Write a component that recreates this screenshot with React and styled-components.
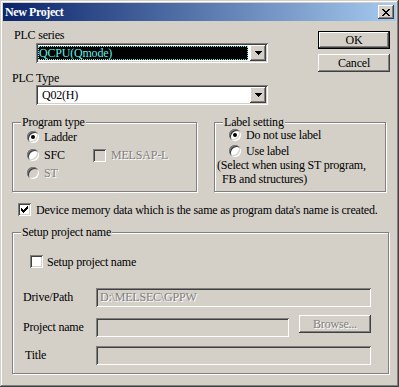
import React from "react";
import styled, { createGlobalStyle, css } from "styled-components";

const GlobalStyle = createGlobalStyle`
  body {
    margin: 0;
    background: #d4d0c8;
  }
`;

const raised = css`
  box-shadow: inset -1px -1px #404040, inset 1px 1px #fff,
    inset -2px -2px #808080, inset 2px 2px #d4d0c8;
`;

const sunken = css`
  box-shadow: inset 1px 1px #808080, inset -1px -1px #fff,
    inset 2px 2px #404040, inset -2px -2px #d4d0c8;
`;

const disabledText = css`
  color: #808080;
  text-shadow: 1px 1px #fff;
`;

const Window = styled.div`
  width: 399px;
  height: 387px;
  box-sizing: border-box;
  padding: 3px;
  background: #d4d0c8;
  font-family: "Liberation Serif", "Times New Roman", serif;
  font-size: 12px;
  line-height: 14px;
  letter-spacing: -0.2px;
  color: #000;
  box-shadow: inset -1px -1px #404040, inset 1px 1px #d4d0c8,
    inset -2px -2px #808080, inset 2px 2px #fff;
  display: flex;
  flex-direction: column;
`;

const TitleBar = styled.div`
  height: 18px;
  display: flex;
  align-items: center;
  justify-content: space-between;
  padding: 0 2px;
  background: linear-gradient(to right, #0a246a, #a6caf0);
  color: #fff;
  font-weight: bold;
  letter-spacing: -0.4px;
`;

const CloseButton = styled.div`
  width: 16px;
  height: 14px;
  background: #d4d0c8;
  display: flex;
  align-items: center;
  justify-content: center;
  ${raised}
`;

const TopRow = styled.div`
  display: flex;
  margin-top: 7px;
`;

const LeftCol = styled.div`
  width: 265px;
  display: flex;
  flex-direction: column;
`;

const FieldLabel = styled.div`
  height: 14px;
  margin-left: ${(p) => p.$indent || 0}px;
  margin-top: ${(p) => p.$top || 0}px;
  white-space: nowrap;
`;

const Combo = styled.div`
  width: 232px;
  height: 20px;
  margin-left: 33px;
  margin-top: ${(p) => p.$top || 0}px;
  box-sizing: border-box;
  padding: 2px;
  background: #fff;
  display: flex;
  ${sunken}
`;

const ComboValue = styled.div`
  flex: 1;
  margin: 1px 2px 1px 0;
  padding-left: 1px;
  ${(p) =>
    p.$selected
      ? css`
          background: #000;
          color: #5ff0e8;
          outline: 1px dotted #5ff0e8;
          outline-offset: -1px;
        `
      : css`
          padding-left: 4px;
        `}
`;

const DropButton = styled.div`
  width: 16px;
  background: #d4d0c8;
  display: flex;
  align-items: center;
  justify-content: center;
  ${raised}
`;

const ButtonCol = styled.div`
  margin-left: 50px;
  margin-top: 3px;
  display: flex;
  flex-direction: column;
  gap: 5px;
`;

const Button = styled.div`
  width: ${(p) => p.$w || 72}px;
  height: 18px;
  box-sizing: border-box;
  background: #d4d0c8;
  display: flex;
  align-items: center;
  justify-content: center;
  ${raised}
  ${(p) =>
    p.$default &&
    css`
      border: 1px solid #000;
    `}
  ${(p) => p.$disabled && disabledText}
`;

const GroupsRow = styled.div`
  display: flex;
  gap: 17px;
  margin: 17px 0 0 9px;
`;

const Group = styled.div`
  position: relative;
  width: ${(p) => p.$w}px;
  height: ${(p) => p.$h}px;
  box-sizing: border-box;
  border: 1px solid #808080;
  box-shadow: inset 1px 1px #fff, 1px 1px #fff;
  padding: ${(p) => p.$pad};
  margin-left: ${(p) => p.$left || 0}px;
  margin-top: ${(p) => p.$top || 0}px;
  display: flex;
  flex-direction: column;
`;

const Legend = styled.div`
  position: absolute;
  top: -8px;
  left: 8px;
  padding: 0 1px;
  background: #d4d0c8;
`;

const OptionRow = styled.div`
  height: ${(p) => p.$h || 18}px;
  display: flex;
  align-items: center;
  margin-left: ${(p) => p.$indent || 0}px;
  margin-top: ${(p) => p.$top || 0}px;
`;

const Option = styled.div`
  display: flex;
  align-items: center;
  gap: ${(p) => p.$gap || 5}px;
  width: ${(p) => (p.$w ? `${p.$w}px` : "auto")};
  white-space: nowrap;
  ${(p) => p.$disabled && disabledText}
`;

const Radio = styled.div`
  width: 12px;
  height: 12px;
  box-sizing: border-box;
  border-radius: 50%;
  background: ${(p) => (p.$disabled ? "#d4d0c8" : "#fff")};
  box-shadow: inset 1px 1px #808080, inset -1px -1px #fff,
    inset 2px 2px #404040, inset -2px -2px #d4d0c8;
  display: flex;
  align-items: center;
  justify-content: center;
  flex-shrink: 0;
`;

const Dot = styled.div`
  width: 4px;
  height: 4px;
  border-radius: 50%;
  background: #000;
`;

const Check = styled.div`
  width: 13px;
  height: 13px;
  box-sizing: border-box;
  background: ${(p) => (p.$disabled ? "#d4d0c8" : "#fff")};
  display: flex;
  align-items: center;
  justify-content: center;
  flex-shrink: 0;
  ${sunken}
`;

const NoteLine = styled.div`
  margin-left: ${(p) => p.$indent || 0}px;
  white-space: nowrap;
`;

const FieldRow = styled.div`
  display: flex;
  align-items: flex-start;
  margin-top: ${(p) => p.$top}px;
`;

const RowLabel = styled.div`
  width: ${(p) => 73 - (p.$indent || 0)}px;
  padding-left: ${(p) => p.$indent || 0}px;
  height: 19px;
  line-height: 19px;
  white-space: nowrap;
`;

const TextField = styled.div`
  width: ${(p) => p.$w}px;
  height: 19px;
  box-sizing: border-box;
  padding: 0 4px;
  line-height: 19px;
  background: #d4d0c8;
  ${sunken}
  ${disabledText}
`;

const CheckMark = () => (
  <svg width="7" height="7" viewBox="0 0 7 7" shapeRendering="crispEdges">
    {[2, 3, 4, 3, 2, 1, 0].map((y, x) => (
      <rect key={x} x={x} y={y} width="1" height="3" fill="#000" />
    ))}
  </svg>
);

const CloseGlyph = () => {
  const px = [
    [0, 0], [1, 0], [6, 0], [7, 0],
    [1, 1], [2, 1], [5, 1], [6, 1],
    [2, 2], [3, 2], [4, 2], [5, 2],
    [3, 3], [4, 3],
    [2, 4], [3, 4], [4, 4], [5, 4],
    [1, 5], [2, 5], [5, 5], [6, 5],
    [0, 6], [1, 6], [6, 6], [7, 6],
  ];
  return (
    <svg width="8" height="7" viewBox="0 0 8 7" shapeRendering="crispEdges">
      {px.map(([x, y]) => (
        <rect key={`${x}-${y}`} x={x} y={y} width="1" height="1" fill="#000" />
      ))}
    </svg>
  );
};

const Arrow = () => (
  <svg width="7" height="4" viewBox="0 0 7 4" shapeRendering="crispEdges">
    <path d="M0 0h7v1H0zM1 1h5v1H1zM2 2h3v1H2zM3 3h1v1H3z" fill="#000" />
  </svg>
);

const App = () => {
  return (
    <>
      <GlobalStyle />
      <Window>
        <TitleBar>
          <span>New Project</span>
          <CloseButton>
            <CloseGlyph />
          </CloseButton>
        </TitleBar>

        <TopRow>
          <LeftCol>
            <FieldLabel $indent={11}>PLC series</FieldLabel>
            <Combo $top={1}>
              <ComboValue $selected>QCPU(Qmode)</ComboValue>
              <DropButton>
                <Arrow />
              </DropButton>
            </Combo>
            <FieldLabel $indent={9} $top={8}>PLC Type</FieldLabel>
            <Combo>
              <ComboValue>Q02(H)</ComboValue>
              <DropButton>
                <Arrow />
              </DropButton>
            </Combo>
          </LeftCol>
          <ButtonCol>
            <Button $default>OK</Button>
            <Button>Cancel</Button>
          </ButtonCol>
        </TopRow>

        <GroupsRow>
          <Group $w={185} $h={70} $pad="5px 0 0 14px">
            <Legend>Program type</Legend>
            <OptionRow>
              <Option>
                <Radio>
                  <Dot />
                </Radio>
                Ladder
              </Option>
            </OptionRow>
            <OptionRow>
              <Option $w={66}>
                <Radio />
                SFC
              </Option>
              <Option $disabled>
                <Check $disabled />
                MELSAP-L
              </Option>
            </OptionRow>
            <OptionRow>
              <Option $disabled>
                <Radio $disabled />
                ST
              </Option>
            </OptionRow>
          </Group>

          <Group $w={172} $h={70} $pad="4px 0 0 2px">
            <Legend>Label setting</Legend>
            <OptionRow $h={15} $indent={12}>
              <Option>
                <Radio>
                  <Dot />
                </Radio>
                Do not use label
              </Option>
            </OptionRow>
            <OptionRow $h={15} $indent={12} $top={1}>
              <Option>
                <Radio />
                Use label
              </Option>
            </OptionRow>
            <NoteLine>(Select when using ST program,</NoteLine>
            <NoteLine $indent={5}>FB and structures)</NoteLine>
          </Group>
        </GroupsRow>

        <OptionRow $h={13} $indent={15} $top={11}>
          <Option>
            <Check>
              <CheckMark />
            </Check>
            Device memory data which is the same as program data's name is created.
          </Option>
        </OptionRow>

        <Group $w={377} $h={142} $left={9} $top={16} $pad="22px 0 0 10px">
          <Legend>Setup project name</Legend>
          <OptionRow $h={13} $indent={7}>
            <Option $gap={4}>
              <Check />
              Setup project name
            </Option>
          </OptionRow>
          <FieldRow $top={20}>
            <RowLabel>Drive/Path</RowLabel>
            <TextField $w={275}>D:\MELSEC\GPPW</TextField>
          </FieldRow>
          <FieldRow $top={11}>
            <RowLabel>Project name</RowLabel>
            <TextField $w={193} />
            <Button $w={72} $disabled style={{ marginLeft: 10, marginTop: -3 }}>
              Browse...
            </Button>
          </FieldRow>
          <FieldRow $top={9}>
            <RowLabel $indent={2}>Title</RowLabel>
            <TextField $w={275} />
          </FieldRow>
        </Group>
      </Window>
    </>
  );
};

export default App;
